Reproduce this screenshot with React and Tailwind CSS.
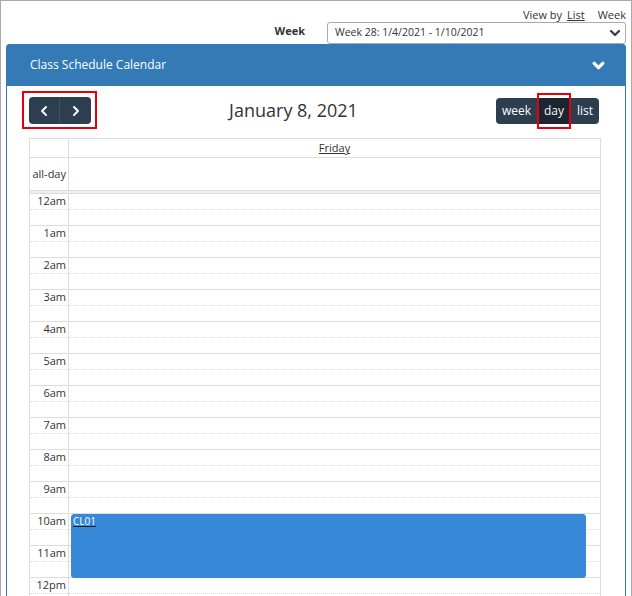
import React from "react";

const hours = ["12am","1am","2am","3am","4am","5am","6am","7am","8am","9am","10am","11am","12pm"];

function Chev({ dir = "down", className = "", sw = 2 }) {
  const pts = dir === "down" ? "2,4 6,8 10,4" : dir === "left" ? "8,2 4,6 8,10" : "4,2 8,6 4,10";
  return (
    <svg viewBox="0 0 12 12" className={className} fill="none" stroke="currentColor" strokeWidth={sw} strokeLinecap="round" strokeLinejoin="round">
      <polyline points={pts} />
    </svg>
  );
}

export default function App() {
  return (
    <div className="w-[632px] h-[596px] overflow-hidden bg-white border-l border-t border-r border-[#a9a9a9] px-[5px] text-[#333]" style={{ fontFamily: '"Open Sans", "Noto Sans", sans-serif' }}>
      {/* view by row */}
      <div className="h-[21px] flex justify-end items-start pt-[7px] text-[11px] leading-[14px]">
        <span>View by</span>
        <span className="ml-[5px] underline text-[#333]">List</span>
        <span className="ml-[13px]">Week</span>
      </div>
      {/* week select row */}
      <div className="h-[22px] flex justify-end items-center">
        <span className="text-[11px] font-bold mr-[22px] -mt-[4px]">Week</span>
        <div className="w-[299px] h-[22px] border border-[#aaa] rounded-[3px] flex items-center justify-between pl-[7px] pr-[4px] text-[10.5px]">
          <span>Week 28: 1/4/2021 - 1/10/2021</span>
          <Chev className="w-[12px] h-[12px] text-[#444]" sw={2.4} />
        </div>
      </div>
      {/* panel */}
      <div className="border border-[#337ab7] rounded-t-[3px] h-[600px]">
        <div className="h-[41px] bg-[#337ab7] flex items-center justify-between pl-[23px] pr-[20px] text-white">
          <span className="text-[12px] -mt-[1px]">Class Schedule Calendar</span>
          <Chev className="w-[13px] h-[13px]" sw={3} />
        </div>
        <div className="pl-[22px] pr-[24px] pt-[11px]">
          {/* toolbar */}
          <div className="h-[28px] mb-[13px] flex justify-between items-start">
            <div className="relative flex h-[27px]">
              <button className="w-[31px] h-[27px] bg-[#2c3e50] rounded-l-[4px] border-r border-[#3e5062] flex items-center justify-center text-white">
                <Chev dir="left" className="w-[12px] h-[12px]" sw={2} />
              </button>
              <button className="w-[31px] h-[27px] bg-[#2c3e50] rounded-r-[4px] flex items-center justify-center text-white">
                <Chev dir="right" className="w-[12px] h-[12px]" sw={2} />
              </button>
              <span className="absolute -left-[7px] -right-[6px] -top-[6px] -bottom-[5px] border-2 border-red-600"></span>
            </div>
            <div className="text-[18px] leading-[26px] text-[#333]">January 8, 2021</div>
            <div className="flex h-[26px] mt-[1px] mr-[2px] text-[12px] text-white">
              <button className="w-[41px] h-[26px] bg-[#2c3e50] rounded-l-[4px]">week</button>
              <button className="relative w-[34px] h-[26px] bg-[#1a252f] text-[#f5f5f5]">
                day
                <span className="absolute left-0 right-0 -top-[5px] -bottom-[5px] border-2 border-red-600"></span>
              </button>
              <button className="w-[28px] h-[26px] bg-[#2c3e50] rounded-r-[4px]">list</button>
            </div>
          </div>
          {/* table */}
          <div className="border-t border-l border-r border-[#ddd]">
            <div className="h-[19px] border-b border-[#ddd] flex">
              <div className="w-[39px] border-r border-[#ddd]"></div>
              <div className="flex-1 flex justify-center items-center text-[11px] font-medium underline leading-[14px]">Friday</div>
            </div>
            <div className="h-[33px] border-b border-[#ddd] flex">
              <div className="w-[39px] border-r border-[#ddd] flex items-center justify-end pr-[2px] text-[11px]">all-day</div>
              <div className="flex-1"></div>
            </div>
            <div className="h-[2px] bg-[#eee]"></div>
            <div className="flex">
              <div className="w-[39px] border-r border-[#ddd]">
                {hours.map((h) => (
                  <div key={h}>
                    <div className="h-[16px] border-t border-[#ddd] text-right pr-[2px] text-[11px] leading-[14px]">{h}</div>
                    <div className="h-[16px] border-t border-dotted border-[#ddd]"></div>
                  </div>
                ))}
              </div>
              <div className="flex-1 relative">
                {hours.map((h) => (
                  <div key={h}>
                    <div className="h-[16px] border-t border-[#ddd]"></div>
                    <div className="h-[16px] border-t border-dotted border-[#ddd]"></div>
                  </div>
                ))}
                <div className="absolute left-[2px] right-[14px] top-[321px] h-[64px] bg-[#3788d8] border border-[#3788d8] rounded-[3px] px-[1px] text-[10px] leading-[13px]">
                  <span className="text-white underline decoration-[#223]">CL01</span>
                </div>
              </div>
            </div>
          </div>
        </div>
      </div>
    </div>
  );
}
